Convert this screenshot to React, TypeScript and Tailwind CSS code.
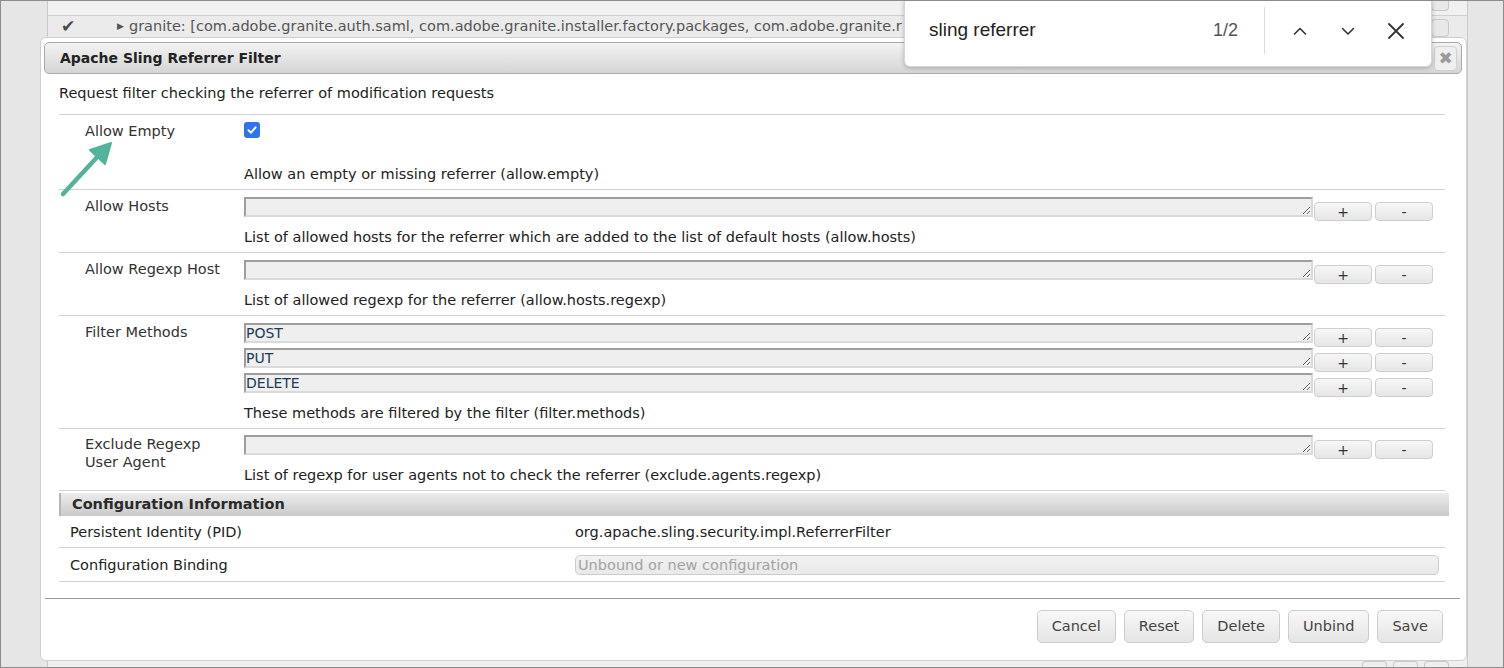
import React from "react";

const rowLine = "border-b border-[#d2d2d2]";

const Check = () => (
  <span className="flex h-4 w-4 items-center justify-center rounded-[3px] bg-[#2f73ee]">
    <svg width="12" height="12" viewBox="0 0 12 12">
      <path d="M2.5 6.3 5 8.7 9.6 3.3" fill="none" stroke="#fff" strokeWidth="2" strokeLinecap="round" strokeLinejoin="round" />
    </svg>
  </span>
);

const SmallButton = ({ label, className = "" }: { label: string; className?: string }) => (
  <button className={`mt-[5px] flex h-[19px] w-[58px] items-center justify-center rounded-[4px] border border-[#cfcfcf] bg-linear-to-b from-[#f7f7f7] to-[#e6e6e6] text-[14px] leading-none text-[#333] ${className}`}>
    {label}
  </button>
);

const Field = ({ value = "" }: { value?: string }) => (
  <div className="flex h-[25px] items-start">
    <textarea
      readOnly
      rows={1}
      defaultValue={value}
      className="h-[20px] flex-1 overflow-hidden border-2 border-[#9e9e9e] border-b-[#dadada] border-r-[#dadada] bg-[#efefef] px-0 py-0 text-[14px] leading-[16px] text-[#1d3a58] outline-none"
    />
    <SmallButton label="+" className="ml-px" />
    <SmallButton label="-" className="ml-[3px]" />
  </div>
);

const Row = ({
  label,
  children,
  desc,
  pt = "pt-[7px]",
}: {
  label: React.ReactNode;
  children: React.ReactNode;
  desc: string;
  pt?: string;
}) => (
  <div className={`flex ${rowLine} ${pt} pb-[6px]`}>
    <div className="w-[185px] shrink-0 pl-[26px] leading-[18px] text-[#333]">{label}</div>
    <div className="flex-1">
      {children}
      <div className="mt-[6px] leading-[18px] text-[#222]">{desc}</div>
    </div>
  </div>
);

const FooterButton = ({ label }: { label: string }) => (
  <button className="h-[33px] rounded-[5px] border border-[#cdcdcd] bg-linear-to-b from-[#f8f8f8] to-[#e5e5e5] px-[14px] text-[14.5px] text-[#444]">
    {label}
  </button>
);

export default function App() {
  return (
    <div className="relative h-[668px] w-[1504px] overflow-hidden border border-[#8c8c8c] bg-[#e7e7e7] font-['DejaVu_Sans',Verdana,sans-serif] text-[14.5px]">
      {/* page behind the dialog */}
      <div className="flex h-full">
        <div className="w-[47px] shrink-0 border-r border-[#c8c8c8] bg-[#e6e6e6]" />
        <div className="flex flex-1 flex-col bg-[#efefef]">
          <div className="flex h-[15px] justify-end border-b border-[#d0d0d0] bg-[#f1f1f1] pr-[18px]">
            <span className="h-[10px] w-[18px] rounded-b-[4px] border border-t-0 border-[#c8c8c8] bg-[#e8e8e8]" />
          </div>
          <div className="flex h-[21px] items-center bg-[#ebebeb]">
            <span className="ml-[13px] w-[26px] text-[17px] leading-none text-[#4a4a4a]">✔</span>
            <span className="ml-[30px] text-[9px] text-[#555]">▶</span>
            <span className="ml-[5px] whitespace-nowrap text-[#555]">
              granite: [com.adobe.granite.auth.saml, com.adobe.granite.installer.factory.packages, com.adobe.granite.r
            </span>
            <span className="ml-auto mr-[18px] mt-[2px] h-[18px] w-[18px] rounded-[4px] border border-[#c8c8c8] bg-[#e8e8e8]" />
          </div>
          <div className="flex-1" />
          <div className="flex h-[6px] justify-end gap-[6px] pr-[18px]">
            <span className="w-[25px] rounded-t-[4px] border border-b-0 border-[#c8c8c8]" />
            <span className="w-[25px] rounded-t-[4px] border border-b-0 border-[#c8c8c8]" />
            <span className="w-[25px] rounded-t-[4px] border border-b-0 border-[#c8c8c8]" />
          </div>
        </div>
        <div className="w-[36px] shrink-0 border-l border-[#cacaca] bg-[#e6e6e6]" />
      </div>

      {/* dialog */}
      <div className="absolute left-[39px] top-[36px] flex h-[624px] w-[1427px] flex-col rounded-[6px] border border-[#cfcfcf] bg-white pl-[3px] pr-[4px] pt-[4px]">
        <div className="flex h-[32px] items-center justify-between rounded-[5px] border border-[#a9a9a9] bg-linear-to-b from-[#f3f3f3] to-[#d5d5d5] pl-[15px] pr-[4px]">
          <span className="font-bold text-[14px] text-[#222]">Apache Sling Referrer Filter</span>
          <span className="flex h-[25px] w-[23px] items-center justify-center rounded-[4px] border border-[#d0d0d0] bg-[#efefef] text-[17px] leading-none text-[#9b9b9b]">
            ✖
          </span>
        </div>

        <div className="pl-[15px] pr-[13px]">
          <div className={`${rowLine} mr-[4px] pb-[12px] pt-[10px] leading-[18px] text-[#222]`}>
            Request filter checking the referrer of modification requests
          </div>
          <div className="mr-[4px]">
            <Row label="Allow Empty" desc="Allow an empty or missing referrer (allow.empty)">
              <div className="h-[37px]">
                <Check />
              </div>
            </Row>
            <Row
              label="Allow Hosts"
              desc="List of allowed hosts for the referrer which are added to the list of default hosts (allow.hosts)"
            >
              <div className="pr-[12px]">
                <Field />
              </div>
            </Row>
            <Row label="Allow Regexp Host" desc="List of allowed regexp for the referrer (allow.hosts.regexp)">
              <div className="pr-[12px]">
                <Field />
              </div>
            </Row>
            <Row label="Filter Methods" desc="These methods are filtered by the filter (filter.methods)">
              <div className="pr-[12px]">
                <Field value="POST" />
                <Field value="PUT" />
                <Field value="DELETE" />
              </div>
            </Row>
            <Row
              pt="pt-[6px]"
              label={
                <>
                  Exclude Regexp
                  <br />
                  User Agent
                </>
              }
              desc="List of regexp for user agents not to check the referrer (exclude.agents.regexp)"
            >
              <div className="pr-[12px]">
                <Field />
              </div>
            </Row>
          </div>

          <div className="mt-[2px] flex h-[23px] items-center border-l-2 border-[#b5b5b5] bg-linear-to-b from-[#ececec] to-[#c9c9c9] pl-[11px] font-bold text-[#2a2a2a]">
            Configuration Information
          </div>
          <div className={`mr-[4px] flex ${rowLine} pb-[6px] pt-[7px] leading-[18px] text-[#222]`}>
            <div className="w-[516px] shrink-0 pl-[11px]">Persistent Identity (PID)</div>
            <div>org.apache.sling.security.impl.ReferrerFilter</div>
          </div>
          <div className={`mr-[4px] flex ${rowLine} pb-[6px] pt-[7px] leading-[18px] text-[#222]`}>
            <div className="w-[516px] shrink-0 pl-[11px] pt-px">Configuration Binding</div>
            <div className="mr-[6px] flex h-[20px] flex-1 items-center rounded-[5px] border border-[#cccccc] bg-linear-to-b from-[#f2f2f2] to-[#e9e9e9] pl-[2px] text-[#a3a3a3]">
              Unbound or new configuration
            </div>
          </div>
        </div>

        <div className="mt-[16px] ml-px mr-[2px] flex justify-end gap-[8px] border-t border-[#9a9a9a] pr-[17px] pt-[11px]">
          <FooterButton label="Cancel" />
          <FooterButton label="Reset" />
          <FooterButton label="Delete" />
          <FooterButton label="Unbind" />
          <FooterButton label="Save" />
        </div>
      </div>

      {/* annotation arrow */}
      <svg className="absolute left-[55px] top-[136px]" width="64" height="66" viewBox="0 0 64 66">
        <line x1="7" y1="57" x2="44" y2="17" stroke="#52b49a" strokeWidth="4.5" strokeLinecap="round" />
        <path d="M55 6 L34 13 L49 27 Z" fill="#52b49a" stroke="#52b49a" strokeWidth="2" strokeLinejoin="round" />
      </svg>

      {/* browser find bar */}
      <div className="absolute left-[903px] top-[-1px] flex h-[67px] w-[528px] items-center rounded-b-[6px] border border-t-0 border-[#d6d6d6] bg-white pb-[5px] pl-[24px] shadow-[0_1px_4px_rgba(0,0,0,0.25)] font-['Liberation_Sans',Arial,sans-serif]">
        <span className="w-[284px] text-[19px] text-[#222]">sling referrer</span>
        <span className="w-[51px] text-[18px] text-[#555]">1/2</span>
        <span className="h-[47px] w-px bg-[#dcdcdc]" />
        <div className="ml-[25px] flex items-center gap-[28px]">
          <svg width="20" height="20" viewBox="0 0 20 20">
            <path d="M4.5 13 10 7.5 15.5 13" fill="none" stroke="#333" strokeWidth="1.6" strokeLinecap="round" strokeLinejoin="round" />
          </svg>
          <svg width="20" height="20" viewBox="0 0 20 20">
            <path d="M4.5 7.5 10 13 15.5 7.5" fill="none" stroke="#333" strokeWidth="1.6" strokeLinecap="round" strokeLinejoin="round" />
          </svg>
          <svg width="20" height="20" viewBox="0 0 20 20">
            <path d="M3 3 17 17 M17 3 3 17" fill="none" stroke="#333" strokeWidth="1.8" strokeLinecap="round" />
          </svg>
        </div>
      </div>
    </div>
  );
}
